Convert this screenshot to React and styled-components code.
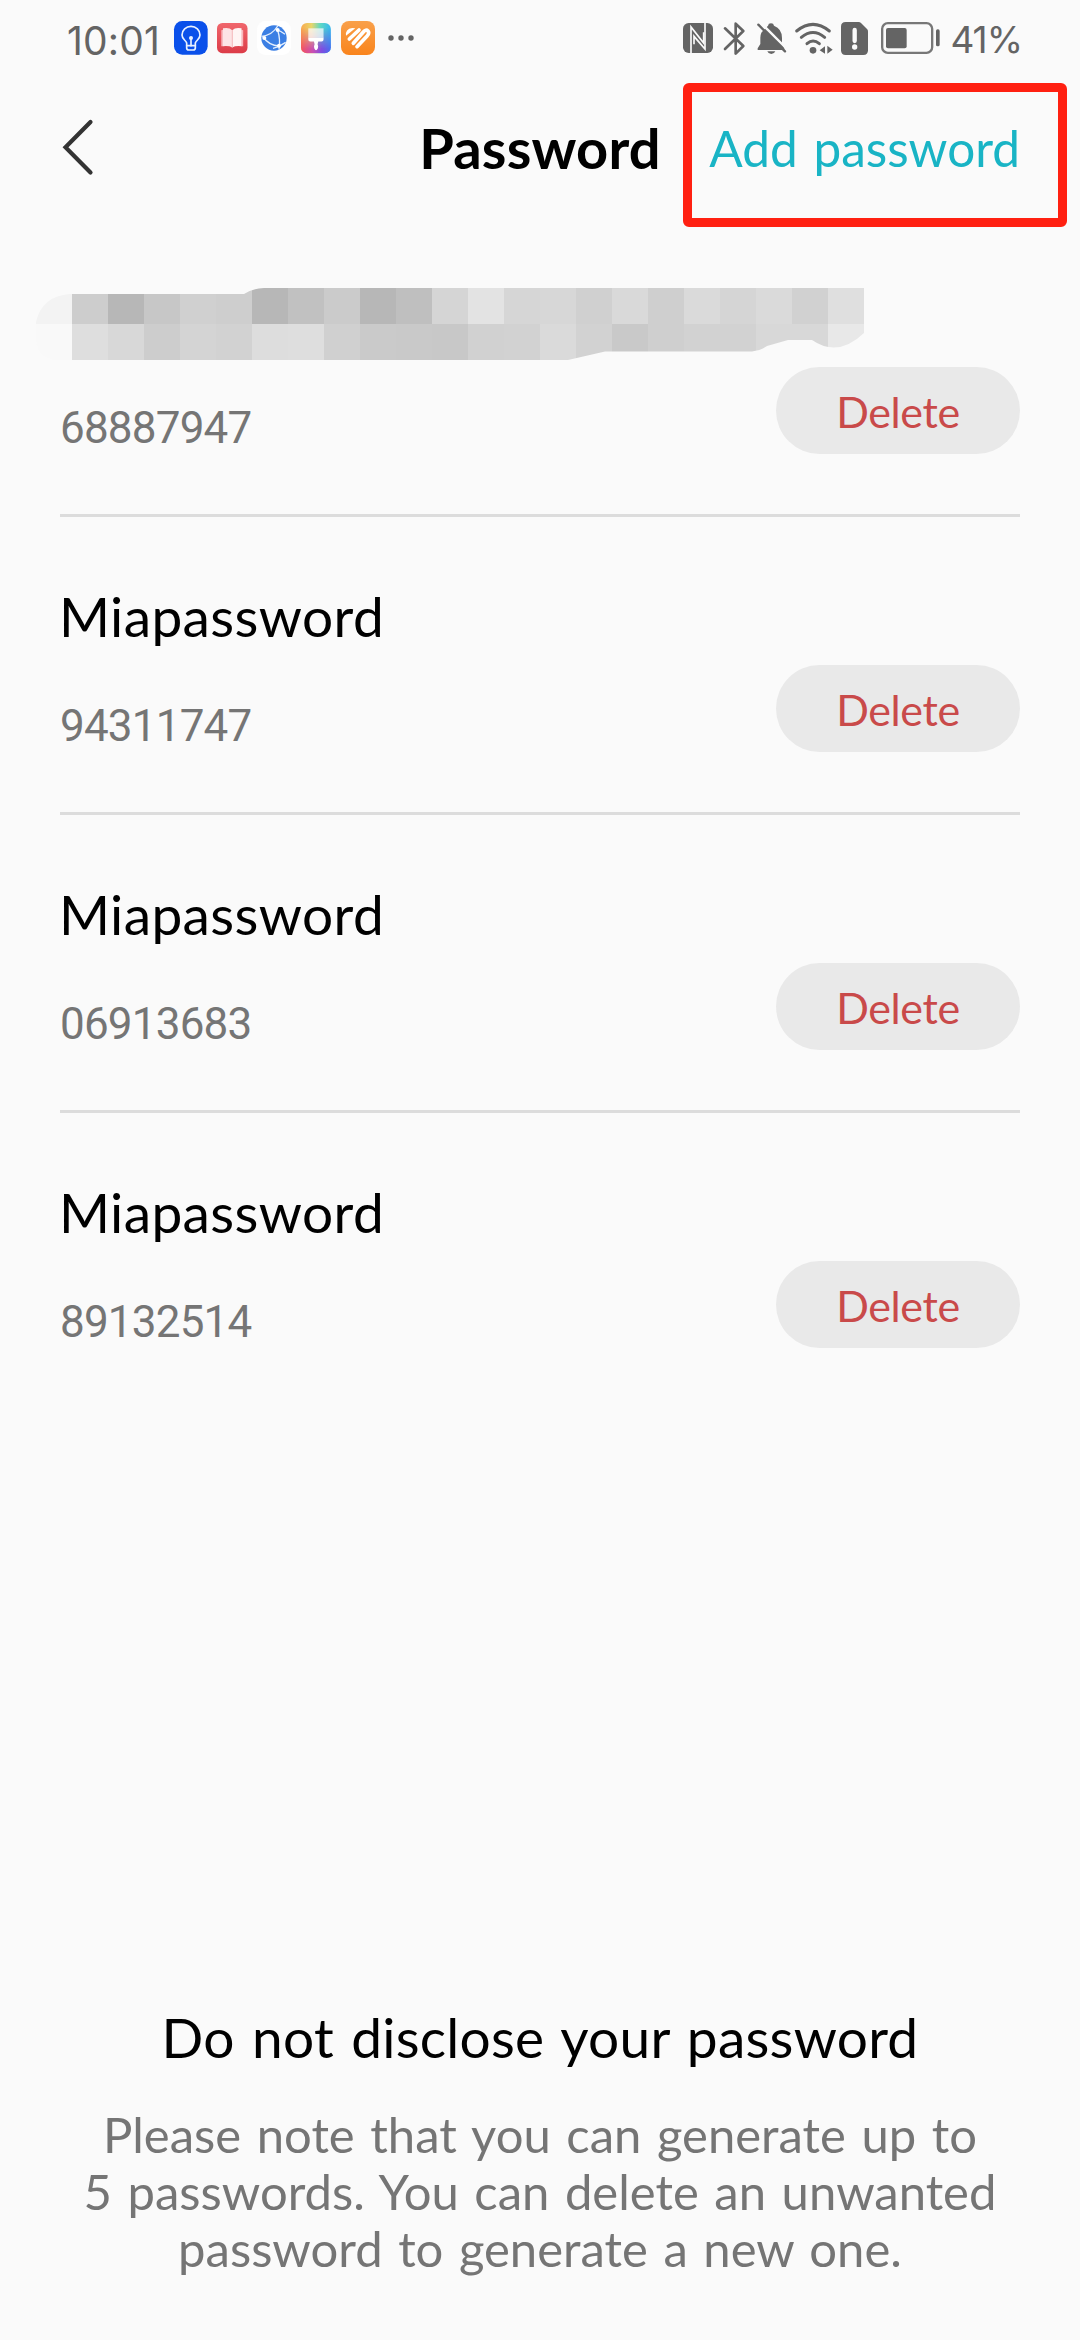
import React from 'react';
import styled, { createGlobalStyle } from 'styled-components';

const GlobalStyle = createGlobalStyle`
  *, *::before, *::after { box-sizing: border-box; }
  body { margin: 0; background: #fafafa; }
`;

const ink = '#646464';

const Screen = styled.main`
  display: flex;
  flex-direction: column;
  width: 1080px;
  min-height: 2340px;
  background: #fafafa;
  color: #000;
  font-family: Lato, 'Open Sans', sans-serif;
`;

/* ---------- status bar ---------- */

const StatusBar = styled.div`
  display: flex;
  justify-content: space-between;
  height: 76px;
  padding: 0 58px 0 67px;
  color: ${ink};
  font-family: Inter, Roboto, sans-serif;
`;

const StatusGroup = styled.div`
  display: flex;
  align-items: center;
`;

const StatusText = styled.span`
  margin-top: ${(p) => p.$drop}px;
  margin-left: ${(p) => p.$gap || 0}px;
  font-size: ${(p) => p.$size}px;
  letter-spacing: ${(p) => p.$tracking || 0}px;
  white-space: nowrap;
`;

const Glyph = styled.svg`
  display: block;
  flex: none;
  width: ${(p) => p.$w}px;
  height: ${(p) => p.$h}px;
  margin-left: ${(p) => p.$gap || 0}px;
  overflow: visible;
`;

const BulbApp = () => (
  <Glyph $w={34} $h={34} $gap={13.5} viewBox="0 0 102 102">
    <rect width="101" height="101" rx="25" fill="#0a50ea" />
    <g fill="none" stroke="#e9f1ff" strokeWidth="5" strokeLinecap="round" strokeLinejoin="round">
      <path d="M38 74V66C36 58 24 55 24 42a27 26 0 0 1 54 0c0 13-12 16-14 24v8Z" />
      <path d="M38 74v7q0 6 6 6h14q6 0 6-6v-7" />
      <path d="M51 52v22" />
    </g>
    <circle cx="51" cy="51" r="6" fill="#e9f1ff" />
  </Glyph>
);

const BookApp = () => (
  <Glyph $w={30.5} $h={30.5} $gap={9.5} viewBox="0 0 92 92">
    <defs>
      <linearGradient id="book" x1="0" y1="0" x2="0" y2="1">
        <stop offset="0" stopColor="#f0666c" />
        <stop offset="1" stopColor="#dc3c48" />
      </linearGradient>
    </defs>
    <rect width="92" height="91" rx="16" fill="url(#book)" />
    <path d="M13 22l6-2v50H13ZM79 22l-6-2v50h6Z" fill="#f9b9be" />
    <path d="M18 16q19-4 28 6v52q-9-6-28-4Z" fill="#fde3e5" />
    <path d="M74 16q-19-4-28 6v52q9-6 28-4Z" fill="#fff4f4" />
    <path d="M46 22v52" stroke="#f3b0b4" strokeWidth="2" />
  </Glyph>
);

const GlobeApp = () => (
  <Glyph $w={34} $h={34} $gap={9.2} viewBox="0 0 102 102">
    <rect width="102" height="102" rx="25" fill="#fff" />
    <circle cx="51" cy="51" r="38" fill="#3b7fe4" />
    <g fill="none" stroke="#e4effd" strokeWidth="4">
      <path d="M14 46C30 44 50 36 62 15" />
      <path d="M18 48C28 62 44 74 66 75" />
      <path d="M62 28C68 46 70 60 66 86" />
      <path d="M48 82Q66 78 86 64" />
      <path d="M58 26Q72 30 84 40" />
    </g>
    <g fill="#fff">
      <circle cx="62" cy="27" r="6" />
      <circle cx="22" cy="51" r="6" />
      <circle cx="66" cy="74" r="6" />
    </g>
  </Glyph>
);

const ThemeApp = () => (
  <Glyph $w={30.5} $h={30.5} $gap={9.8} viewBox="0 0 92 92">
    <defs>
      <linearGradient id="themeTop" x1="0" y1="0" x2="1" y2="0">
        <stop offset="0" stopColor="#f9a94e" />
        <stop offset=".35" stopColor="#e8d66a" />
        <stop offset=".65" stopColor="#5ed8c4" />
        <stop offset="1" stopColor="#35b8ee" />
      </linearGradient>
      <linearGradient id="themeBottom" x1="0" y1="0" x2="1" y2="0">
        <stop offset="0" stopColor="#f4525e" />
        <stop offset=".4" stopColor="#c850b4" />
        <stop offset=".7" stopColor="#7e4ee0" />
        <stop offset="1" stopColor="#4a6cf0" />
      </linearGradient>
      <linearGradient id="themeFade" x1="0" y1="0" x2="0" y2="1">
        <stop offset=".15" stopColor="#fff" stopOpacity="0" />
        <stop offset=".85" stopColor="#fff" />
      </linearGradient>
      <mask id="themeMask"><rect width="92" height="92" fill="url(#themeFade)" /></mask>
    </defs>
    <rect width="90" height="91" rx="18" fill="url(#themeTop)" />
    <rect width="90" height="91" rx="18" fill="url(#themeBottom)" mask="url(#themeMask)" />
    <path d="M22 16h46v28H22Z" fill="#fff" fillOpacity=".72" />
    <path d="M22 44h46v6q0 6-6 6H52l-2 8q3 6 1 12-6 12-11 0-2-6 1-12l-2-8H28q-6 0-6-6Z" fill="#fff" />
  </Glyph>
);

const HealthApp = () => (
  <Glyph $w={34} $h={34} $gap={9.8} viewBox="0 0 102 102">
    <defs>
      <linearGradient id="health" x1="0" y1="0" x2="0" y2="1">
        <stop offset="0" stopColor="#f9a04a" />
        <stop offset="1" stopColor="#f9841c" />
      </linearGradient>
    </defs>
    <rect width="102" height="102" rx="24" fill="url(#health)" />
    <path d="M15 44Q12 24 34 21L43 22Z" fill="#fff" />
    <g fill="none" stroke="#fff" strokeWidth="11" strokeLinecap="round" strokeLinejoin="round">
      <path d="M25 54L54 27" />
      <path d="M37 67L67 33q8-9 14-3 5 6-2 14L48 77" />
    </g>
  </Glyph>
);

const MoreDots = () => (
  <Glyph $w={26} $h={6} $gap={13.5} viewBox="0 0 26 6" fill={ink}>
    <circle cx="3" cy="3" r="2.7" />
    <circle cx="13" cy="3" r="2.7" />
    <circle cx="23" cy="3" r="2.7" />
  </Glyph>
);

const NfcIcon = () => (
  <Glyph $w={30} $h={30} viewBox="0 0 90 90">
    <rect width="90" height="90" rx="17" fill={ink} />
    <g fill="none" stroke="#fafafa" strokeWidth="5">
      <path d="M24 92V12L62 60V28" />
      <path d="M66 -2V78L33 40V64" />
    </g>
  </Glyph>
);

const BluetoothIcon = () => (
  <Glyph $w={21} $h={33} $gap={11.5} viewBox="0 0 63 99">
    <path
      d="M3 19L58 72L35 95V5L58 27L3 81"
      fill="none" stroke={ink} strokeWidth="8" strokeLinejoin="round" strokeLinecap="round"
    />
  </Glyph>
);

const BellOffIcon = () => (
  <Glyph $w={29} $h={31} $gap={12} viewBox="0 0 87 93">
    <path d="M33 8q1-7 9-7t9 7q24 9 24 37v18l7 13v5H2v-5l8-13V44q0-8 3-15Z" fill={ink} />
    <path d="M31 85h24q-3 8-12 8t-12-8Z" fill={ink} />
    <path d="M9 -3L93 81" stroke="#fafafa" strokeWidth="7" />
    <path d="M4 5L84 85" stroke={ink} strokeWidth="7" strokeLinecap="round" />
  </Glyph>
);

const WifiIcon = () => (
  <Glyph $w={38} $h={31} $gap={9.3} viewBox="0 0 114 93">
    <g fill="none" stroke={ink} strokeWidth="9" strokeLinecap="round">
      <path d="M5 24Q54 -16 103 24" />
      <path d="M19 43Q54 14 89 43" />
      <path d="M36 62Q54 46 73 62" />
    </g>
    <circle cx="54" cy="82" r="10" fill={ink} />
    <path d="M74 82L90 70V92Z M97 68L113 80L97 92Z" fill={ink} />
  </Glyph>
);

const SimAlertIcon = () => (
  <Glyph $w={27} $h={33} $gap={8} viewBox="0 0 81 99">
    <path d="M14 0H53q4 0 7 3L78 21q3 3 3 7V85q0 14-14 14H14Q0 99 0 85V14Q0 0 14 0Z" fill={ink} />
    <path d="M41 24V57" stroke="#fafafa" strokeWidth="13" strokeLinecap="round" />
    <circle cx="41" cy="75" r="8" fill="#fafafa" />
  </Glyph>
);

const BatteryIcon = () => (
  <Glyph $w={59} $h={32} $gap={13} viewBox="0 0 177 96">
    <rect x="3.5" y="3.5" width="150" height="89" rx="17" fill="none" stroke="#777" strokeWidth="7" />
    <rect x="15" y="18" width="62" height="61" rx="6" fill={ink} />
    <rect x="165" y="22" width="11" height="51" rx="5" fill={ink} />
  </Glyph>
);

/* ---------- header ---------- */

const Header = styled.header`
  position: relative;
  display: grid;
  grid-template-columns: 1fr auto 1fr;
  align-items: start;
  height: 143px;
  padding: 32px 60px 0;
`;

const BackButton = styled.button`
  display: flex;
  justify-self: start;
  margin: 10px 0 0 2px;
  padding: 0;
  border: 0;
  background: none;
`;

const Title = styled.h1`
  margin: 0;
  font-size: 56px;
  font-weight: 700;
  line-height: 80px;
  letter-spacing: 0.2px;
`;

const AddLink = styled.a`
  justify-self: end;
  color: #19b4c5;
  font-size: 49.5px;
  line-height: 80px;
  word-spacing: 3px;
  white-space: nowrap;
`;

const Highlight = styled.div`
  position: absolute;
  top: 7px;
  left: 683px;
  width: 384px;
  height: 144px;
  border: 9px solid #ff2011;
  border-radius: 6px;
  pointer-events: none;
`;

/* ---------- password list ---------- */

const List = styled.ul`
  margin: 0;
  padding: 0 60px;
  list-style: none;
`;

const Item = styled.li`
  height: 298px;
  padding-top: 63px;
  border-bottom: 3px solid #dcdcdc;

  &:last-child { border-bottom: 0; }
`;

const Name = styled.div`
  height: 72px;
  margin: 0 0 13px -1px;
  font-size: 55px;
  line-height: 72px;
  letter-spacing: 0.4px;
`;

const ItemFooter = styled.div`
  display: flex;
  align-items: flex-start;
  justify-content: space-between;
`;

const Code = styled.span`
  padding-top: 31px;
  color: #757575;
  font-family: Roboto, Inter, sans-serif;
  font-size: 44px;
  line-height: 60px;
  letter-spacing: -0.8px;
`;

const DeleteButton = styled.button`
  width: 244px;
  height: 87px;
  padding: 3px 0 0;
  border: 0;
  border-radius: 44px;
  background: #e9e9e9;
  color: #c94a4a;
  font: 400 43px/84px Lato, sans-serif;
  letter-spacing: -0.4px;
`;

const Mosaic = styled.div`
  display: grid;
  grid-template-columns: repeat(23, 36px);
  grid-auto-rows: 36px;
  width: 828px;
  margin: 6px 0 7px -24px;
  clip-path: path('M0 34Q6 8 34 6H208Q216 .5 228 0H828V45Q802 70 776 52H752L731 58Q724 63 716 63.5H569L532 72H20Q0 70 0 50Z');
`;

const Cell = styled.span`
  background: ${(p) => p.$tone};
`;

const tones = [
  'f3 cd b7 c7 d0 ce b7 c1 cb b7 bf d5 e3 d6 d7 d0 d9 cf da d5 da d1 df',
  'f9 de d8 cd d4 d2 dd de d0 ca c9 c8 d1 d2 da d2 c9 cf d2 d2 d8 d8 e8',
].join(' ').split(' ');

const MaskedName = () => (
  <Mosaic>
    {tones.map((t, i) => <Cell key={i} $tone={`#${t}${t}${t}`} />)}
  </Mosaic>
);

/* ---------- bottom notice ---------- */

const Notice = styled.section`
  margin-top: auto;
  padding: 0 60px 63px;
  text-align: center;
`;

const NoticeTitle = styled.h2`
  margin: 0 0 33px;
  font-size: 55px;
  font-weight: 400;
  line-height: 72px;
  letter-spacing: 0.25px;
  word-spacing: 3px;
`;

const NoticeText = styled.p`
  margin: 0;
  color: #757575;
  font-size: 49px;
  line-height: 57px;
  word-spacing: 3px;
  white-space: nowrap;
`;

const passwords = [
  { code: '68887947' },
  { name: 'Miapassword', code: '94311747' },
  { name: 'Miapassword', code: '06913683' },
  { name: 'Miapassword', code: '89132514' },
];

export default function App() {
  return (
    <Screen>
      <GlobalStyle />
      <StatusBar>
        <StatusGroup>
          <StatusText $size={39} $tracking={0.2} $drop={4}>10:01</StatusText>
          <BulbApp />
          <BookApp />
          <GlobeApp />
          <ThemeApp />
          <HealthApp />
          <MoreDots />
        </StatusGroup>
        <StatusGroup>
          <NfcIcon />
          <BluetoothIcon />
          <BellOffIcon />
          <WifiIcon />
          <SimAlertIcon />
          <BatteryIcon />
          <StatusText $size={37} $tracking={-1} $drop={3} $gap={10}>41%</StatusText>
        </StatusGroup>
      </StatusBar>

      <Header>
        <BackButton aria-label="Back">
          <Glyph $w={32} $h={60} viewBox="0 0 32 60">
            <path d="M28.5 4L3.5 29.3L28.5 54.5" fill="none" stroke="#333" strokeWidth="4.2" strokeLinecap="round" />
          </Glyph>
        </BackButton>
        <Title>Password</Title>
        <AddLink>Add password</AddLink>
        <Highlight />
      </Header>

      <List>
        {passwords.map((p) => (
          <Item key={p.code}>
            {p.name ? <Name>{p.name}</Name> : <MaskedName />}
            <ItemFooter>
              <Code>{p.code}</Code>
              <DeleteButton>Delete</DeleteButton>
            </ItemFooter>
          </Item>
        ))}
      </List>

      <Notice>
        <NoticeTitle>Do not disclose your password</NoticeTitle>
        <NoticeText>
          Please note that you can generate up to<br />
          5 passwords. You can delete an unwanted<br />
          password to generate a new one.
        </NoticeText>
      </Notice>
    </Screen>
  );
}
